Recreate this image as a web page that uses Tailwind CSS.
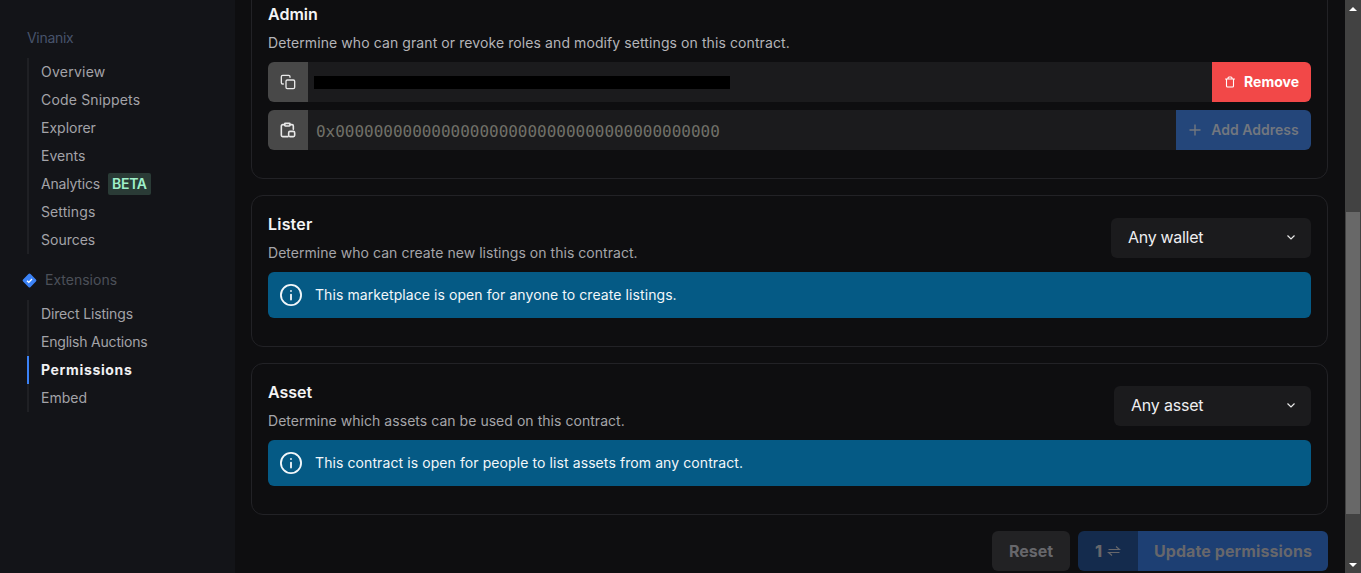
<!DOCTYPE html>
<html lang="en">
<head>
  <meta charset="UTF-8">
  <meta name="viewport" content="width=device-width, initial-scale=1.0">
  <title>Permissions</title>
  <script src="https://cdn.jsdelivr.net/npm/@tailwindcss/browser@4"></script>
</head>
<body class="bg-[#0e0e10] font-['Inter',sans-serif] overflow-hidden">
  <div class="flex h-[573px] overflow-hidden">
    <!-- sidebar -->
    <aside class="w-[235px] shrink-0 bg-[#131418] pt-[28px] pl-[27px] text-sm text-[#a3a3a8]">
      <div class="h-5 leading-5 text-[#47536b] tracking-[-0.3px]">Vinanix</div>
      <ul class="mt-[10px] border-l-2 border-[#1f2024]">
        <li class="h-7 leading-7 pl-3 tracking-[0.25px]">Overview</li>
        <li class="h-7 leading-7 pl-3 tracking-[0.17px]">Code Snippets</li>
        <li class="h-7 leading-7 pl-3">Explorer</li>
        <li class="h-7 leading-7 pl-3">Events</li>
        <li class="h-7 pl-3 flex items-center gap-2">
          <span class="tracking-[-0.2px]">Analytics</span>
          <span class="h-[22px] leading-[22px] w-[43px] text-center rounded-[2px] bg-[#2a3b36] text-[#9ff0c9] font-semibold tracking-[-0.3px]">BETA</span>
        </li>
        <li class="h-7 leading-7 pl-3 tracking-[0.1px]">Settings</li>
        <li class="h-7 leading-7 pl-3">Sources</li>
      </ul>
      <div class="h-5 mt-4 -ml-[5px] flex items-center gap-[8px] text-[#4c5058]">
        <svg class="w-[15px] h-[15px]" viewBox="0 0 15 15">
          <rect x="2.2" y="2.2" width="10.600" height="10.600" rx="1.5" transform="rotate(45 7.5 7.5)" fill="#3b82f6"/>
          <path d="M5 7.7l1.8 1.7L10 6" fill="none" stroke="#fff" stroke-width="1.3"/>
        </svg>
        <span>Extensions</span>
      </div>
      <ul class="mt-[10px] border-l-2 border-[#1f2024]">
        <li class="h-7 leading-7 pl-3 tracking-[-0.15px]">Direct Listings</li>
        <li class="h-7 leading-7 pl-3 tracking-[-0.2px]">English Auctions</li>
        <li class="h-7 leading-7 pl-3 -ml-[2px] border-l-2 border-[#3b82f6] text-[#f0f0f2] font-bold tracking-[0.65px]">Permissions</li>
        <li class="h-7 leading-7 pl-3">Embed</li>
      </ul>
    </aside>

    <!-- main column -->
    <main class="flex-1 min-w-0 pl-4 pr-[17px] -mt-[15px]">
      <section class="rounded-xl border border-[#222226] px-4 pt-4 pb-7">
        <h3 class="h-6 leading-6 font-semibold text-[#f4f4f5]">Admin</h3>
        <p class="mt-[7px] h-5 leading-5 text-sm text-[#b4b4b8] tracking-[0.09px]">Determine who can grant or revoke roles and modify settings on this contract.</p>
        <div class="mt-[9px] flex h-10">
          <div class="w-10 bg-[#484848] rounded-l-md flex items-center justify-center">
            <svg class="w-4 h-4" viewBox="0 0 24 24" fill="none" stroke="#e8e8e8" stroke-width="2" stroke-linecap="round" stroke-linejoin="round">
              <rect x="9" y="9" width="13" height="13" rx="2"/>
              <path d="M5 15H4a2 2 0 0 1-2-2V4a2 2 0 0 1 2-2h9a2 2 0 0 1 2 2v1"/>
            </svg>
          </div>
          <div class="flex-1 bg-[#1b1b1d] flex items-center pl-[6px]">
            <div class="w-[416px] h-[13px] bg-black"></div>
          </div>
          <button class="w-[99px] bg-[#f24848] rounded-r-md flex items-center justify-center gap-[8px] text-sm font-bold text-white">
            <svg class="w-3 h-3" viewBox="0 0 24 24" fill="none" stroke="#fff" stroke-width="2.2" stroke-linecap="round" stroke-linejoin="round">
              <path d="M3 6h18M19 6v14a2 2 0 0 1-2 2H7a2 2 0 0 1-2-2V6M8 6V4a2 2 0 0 1 2-2h4a2 2 0 0 1 2 2v2"/>
            </svg>
            <span>Remove</span>
          </button>
        </div>
        <div class="mt-2 flex h-10">
          <div class="w-10 bg-[#484848] rounded-l-md flex items-center justify-center">
            <svg class="w-4 h-4 -ml-[1px]" viewBox="0 0 24 24" fill="none" stroke="#e8e8e8" stroke-width="2.4" stroke-linecap="round" stroke-linejoin="round">
              <rect x="7" y="2" width="8" height="4" rx="1"/>
              <path d="M15 4h3a2 2 0 0 1 2 2v5M7 4H4a2 2 0 0 0-2 2v14a2 2 0 0 0 2 2h8"/>
              <rect x="13" y="14" width="9" height="8" rx="2"/>
            </svg>
          </div>
          <div class="flex-1 bg-[#1b1b1d] flex items-center pl-2 pt-[3px] font-['DejaVu_Sans_Mono',monospace] text-base text-[#707068] tracking-[-0.02px]">0x0000000000000000000000000000000000000000</div>
          <button class="w-[135px] bg-[#24467a] rounded-r-md flex items-center justify-center gap-[9px] text-sm font-semibold text-[#72777f]">
            <svg class="w-[14px] h-[14px]" viewBox="0 0 14 14" fill="none" stroke="#72777f" stroke-width="1.4"><path d="M7 1.500v11M1.500 7h11"/></svg>
            <span>Add Address</span>
          </button>
        </div>
      </section>

      <section class="mt-4 rounded-xl border border-[#222226] px-4 pt-4 pb-7">
        <div class="flex items-center justify-between">
          <div>
            <h3 class="h-6 leading-6 font-semibold text-[#f4f4f5] tracking-[0.2px]">Lister</h3>
            <p class="mt-[7px] h-5 leading-5 text-sm text-[#a5a5a9] tracking-[0.04px]">Determine who can create new listings on this contract.</p>
          </div>
          <div class="w-[200px] h-10 rounded-md bg-[#1b1b1d] pl-[17px] pr-[15px] pb-[2px] flex items-center justify-between text-base text-[#eeeef0] tracking-[-0.3px]">
            <span>Any wallet</span>
            <svg class="w-[10px] h-[10px]" viewBox="0 0 10 10" fill="none" stroke="#e8e8e8" stroke-width="1.2"><path d="M1.500 3.500L5 7l3.500-3.500"/></svg>
          </div>
        </div>
        <div class="mt-[9px] h-[46px] rounded-md bg-[#055a85] px-3 flex items-center gap-[13px] text-sm text-[#f2f7fa] tracking-[0.08px]">
          <svg class="w-[22px] h-[22px] shrink-0" viewBox="0 0 24 24" fill="none" stroke="#f2f7fa" stroke-width="2" stroke-linecap="round">
            <circle cx="12" cy="12" r="11"/><path d="M12 11.500v5.500M12 7.500v.1"/>
          </svg>
          <span>This marketplace is open for anyone to create listings.</span>
        </div>
      </section>

      <section class="mt-4 rounded-xl border border-[#222226] px-4 pt-4 pb-7">
        <div class="flex items-center justify-between">
          <div>
            <h3 class="h-6 leading-6 font-semibold text-[#f4f4f5]">Asset</h3>
            <p class="mt-[7px] h-5 leading-5 text-sm text-[#a5a5a9] tracking-[0.04px]">Determine which assets can be used on this contract.</p>
          </div>
          <div class="w-[197px] h-10 rounded-md bg-[#1b1b1d] pl-[17px] pr-[15px] pb-[2px] flex items-center justify-between text-base text-[#eeeef0] tracking-[-0.2px]">
            <span>Any asset</span>
            <svg class="w-[10px] h-[10px]" viewBox="0 0 10 10" fill="none" stroke="#e8e8e8" stroke-width="1.2"><path d="M1.500 3.500L5 7l3.500-3.500"/></svg>
          </div>
        </div>
        <div class="mt-[9px] h-[46px] rounded-md bg-[#055a85] px-3 flex items-center gap-[13px] text-sm text-[#f2f7fa] tracking-[0.09px]">
          <svg class="w-[22px] h-[22px] shrink-0" viewBox="0 0 24 24" fill="none" stroke="#f2f7fa" stroke-width="2" stroke-linecap="round">
            <circle cx="12" cy="12" r="11"/><path d="M12 11.500v5.500M12 7.500v.1"/>
          </svg>
          <span>This contract is open for people to list assets from any contract.</span>
        </div>
      </section>

      <!-- form actions -->
      <div class="mt-4 flex justify-end gap-2 h-10 text-base font-bold text-[#67676b]">
        <button class="w-[78px] rounded-md bg-[#222224]">Reset</button>
        <div class="flex">
          <div class="w-[60px] rounded-l-md bg-[#142b4d] flex items-center justify-center gap-[5px]">
            <span class="font-extrabold">1</span>
            <svg class="w-[14px] h-[14px]" viewBox="0 0 14 14" fill="none" stroke="#67676b" stroke-width="1.1"><path d="M1.500 5.500h11L9 2.500M12.500 8.500h-11l3.500 3"/></svg>
          </div>
          <button class="w-[190px] rounded-r-md bg-[#1d3f73] tracking-[0.1px]">Update permissions</button>
        </div>
      </div>
    </main>

    <!-- scrollbar -->
    <div class="w-4 shrink-0 bg-[#424242] flex flex-col items-center">
      <div class="h-[17px] flex items-center justify-center">
        <div class="w-0 h-0 border-x-[4px] border-x-transparent border-b-[4px] border-b-white"></div>
      </div>
      <div class="h-[195px]"></div>
      <div class="w-[14px] h-[302px] bg-[#686868]"></div>
      <div class="flex-1"></div>
      <div class="h-[17px] flex items-center justify-center">
        <div class="w-0 h-0 border-x-[4px] border-x-transparent border-t-[4px] border-t-white"></div>
      </div>
    </div>
  </div>
</body>
</html>
